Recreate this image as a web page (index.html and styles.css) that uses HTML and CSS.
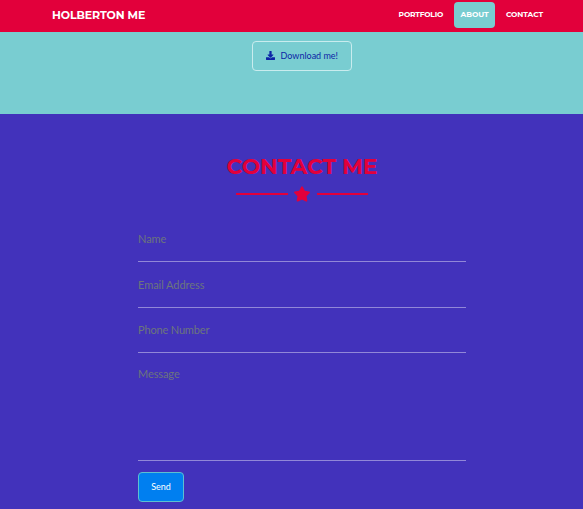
FILE: index.html
```
<!DOCTYPE html>
<html lang="en">
<head>
<meta charset="utf-8">
<title>Holberton Me</title>
<link rel="stylesheet" href="styles.css">
</head>
<body>
<header class="navbar">
  <a class="brand">HOLBERTON ME</a>
  <nav class="menu">
    <a class="link portfolio">PORTFOLIO</a>
    <a class="link active">ABOUT</a>
    <a class="link contact-link">CONTACT</a>
  </nav>
</header>
<section class="about">
  <a class="download">
    <svg class="download-icon" viewBox="0 0 512 512"><path d="M216 0h80c13 0 24 11 24 24v168h88c18 0 27 21 14 34L270 378c-7 7-20 7-27 0L90 226c-13-13-4-34 14-34h88V24c0-13 11-24 24-24zm296 376v112c0 13-11 24-24 24H24c-13 0-24-11-24-24V376c0-13 11-24 24-24h147l49 49c20 20 52 20 72 0l49-49h147c13 0 24 11 24 24z"/></svg>
    <span>Download me!</span>
  </a>
</section>
<section class="contact">
  <h2 class="title">CONTACT ME</h2>
  <div class="divider">
    <span class="rule"></span>
    <svg class="star" viewBox="20 0 536 512"><path d="M259 18l-65 132-146 22c-26 3-37 35-18 54l106 103-25 145c-5 26 23 46 46 34l131-69 131 69c23 12 51-8 46-34l-25-145 106-103c19-19 8-51-18-54l-146-22-65-132c-12-24-46-24-58 0z"/></svg>
    <span class="rule"></span>
  </div>
  <form class="form">
    <input class="field name" placeholder="Name">
    <input class="field email" placeholder="Email Address">
    <input class="field phone" placeholder="Phone Number">
    <textarea class="field message" placeholder="Message"></textarea>
    <button class="send" type="button">Send</button>
  </form>
</section>
</body>
</html>
```
FILE: styles.css
```
* { box-sizing: border-box; }
body {
  margin: 0;
  height: 509px;
  overflow: hidden;
  display: flex;
  flex-direction: column;
  background: #4232bb;
  font-family: Lato, "Liberation Sans", sans-serif;
}
.navbar {
  flex: none;
  height: 32px;
  padding: 0 33px 0 52px;
  display: flex;
  justify-content: space-between;
  align-items: flex-start;
  background: #e2003b;
  color: #fff;
  font-family: Montserrat, Inter, sans-serif;
  white-space: nowrap;
}
.brand {
  font-size: 11px;
  font-weight: 700;
  line-height: 30px;
  letter-spacing: -0.1px;
}
.menu { display: flex; gap: 3.5px; padding-top: 2px; }
.link {
  height: 26px;
  padding: 0 7px;
  border-radius: 4px;
  font-size: 7.5px;
  font-weight: 700;
  line-height: 25px;
  letter-spacing: -0.08px;
}
.portfolio { letter-spacing: -0.2px; }
.active { background: #79cdd1; }
.about {
  flex: none;
  height: 81.5px;
  padding-top: 9px;
  padding-left: 252px;
  background: #79cdd1;
}
.download {
  display: flex;
  align-items: center;
  width: 100px;
  height: 30px;
  padding: 0 0 1px 12.5px;
  border: 1.5px solid #c9ecee;
  border-radius: 4px;
  color: #0c25a6;
  font-size: 9px;
  white-space: nowrap;
}
.download-icon { width: 9px; height: 9px; margin-right: 6px; fill: #0c25a6; }
.contact { flex: 1; padding: 40px 117px 0 138px; }
.title {
  width: 328px;
  margin: 0;
  color: #e2003b;
  font: 700 22px/26px Montserrat, Inter, sans-serif;
  text-align: center;
  white-space: nowrap;
  letter-spacing: -0.15px;
}
.divider {
  display: flex;
  justify-content: center;
  align-items: center;
  gap: 6.5px;
  width: 328px;
  height: 16px;
  margin-top: 6.5px;
}
.rule { width: 51.5px; height: 2px; background: #e2003b; }
.star { width: 16px; height: 16px; fill: #e2003b; }
.form { display: flex; flex-direction: column; align-items: flex-start; margin-top: 20px; }
.field {
  width: 328px;
  margin: 0;
  padding: 0;
  border: 0;
  border-bottom: 1px solid #9187d8;
  border-radius: 0;
  outline: 0;
  background: transparent;
  color: #fff;
  font: 11px/16px Lato, sans-serif;
  resize: none;
}
.field::placeholder { color: #6c757d; opacity: 1; }
.name { height: 40px; padding-bottom: 7px; letter-spacing: -0.1px; }
.email, .phone { height: 45.5px; padding-bottom: 0; letter-spacing: -0.05px; }
.phone { padding-bottom: 1px; letter-spacing: -0.16px; }
.message { height: 108px; padding-top: 13px; letter-spacing: -0.1px; }
.send {
  width: 46px;
  height: 30px;
  margin-top: 11px;
  padding: 0 0 2px;
  border: 1px solid #5dbfd0;
  border-radius: 4px;
  background: #007ff0;
  color: #fff;
  font: 9px/1 Lato, sans-serif;
}
```
